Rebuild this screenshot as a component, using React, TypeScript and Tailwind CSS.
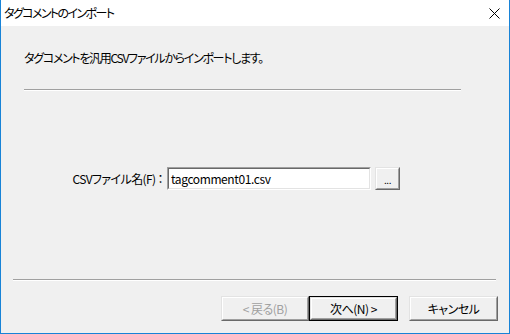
function RaisedButton({
  children,
  width,
  isDefault,
  disabled,
}: {
  children: React.ReactNode;
  width: string;
  isDefault?: boolean;
  disabled?: boolean;
}) {
  return (
    <div className={"h-[25px] flex " + width + (isDefault ? " border border-black" : "")}>
      <div className="flex-1 flex border border-t-[#e3e3e3] border-l-[#e3e3e3] border-r-[#696969] border-b-[#696969]">
        <div
          className={
            "flex-1 flex items-center justify-center tracking-[-0.5px] border border-t-white border-l-white border-r-[#a0a0a0] border-b-[#a0a0a0] " +
            (disabled ? "text-[#a0a0a0]" : "text-black")
          }
        >
          {children}
        </div>
      </div>
    </div>
  );
}

export default function App() {
  return (
    <div className="w-[510px] h-[334px] flex flex-col border-x border-b border-[#1883d7] bg-[#f0f0f0] text-[12px] leading-4 text-black font-['Noto_Sans_CJK_JP',sans-serif] [font-feature-settings:'palt']">
      {/* title bar */}
      <div className="h-[26px] bg-white flex items-center justify-between pl-[3px] pr-[9px]">
        <span className="tracking-[-1.6px]">タグコメントのインポート</span>
        <svg width="11" height="11" viewBox="0 0 11 11" className="mt-[1px]">
          <path d="M0.5 0.5 L10.5 10.5 M10.5 0.5 L0.5 10.5" stroke="#000" strokeWidth="1" />
        </svg>
      </div>

      <div className="flex-1 flex flex-col">
        <p className="mt-[24px] ml-[23px] tracking-[-1.3px]">タグコメントを汎用CSVファイルからインポートします。</p>

        <div className="mt-[23px] ml-[23px] w-[437px] border-t border-b border-t-[#a0a0a0] border-b-white" />

        <div className="mt-[76px] ml-[23px] flex items-center h-[23px]">
          <label className="w-[143px] pr-[4px] text-right tracking-[-0.6px]">CSVファイル名(F) ：</label>
          <div className="w-[204px] h-[23px] flex border border-t-[#a0a0a0] border-l-[#a0a0a0] border-r-white border-b-white">
            <div className="flex-1 flex items-center bg-white pl-[2px] tracking-[-0.4px] border border-t-[#696969] border-l-[#696969] border-r-[#e3e3e3] border-b-[#e3e3e3]">
              tagcomment01.csv
            </div>
          </div>
          <div className="ml-[4px] w-[25px] h-[23px] flex border border-t-[#e3e3e3] border-l-[#e3e3e3] border-r-[#696969] border-b-[#696969]">
            <div className="flex-1 flex items-center justify-center border border-t-white border-l-white border-r-[#a0a0a0] border-b-[#a0a0a0] text-[10px] tracking-[-0.5px] pt-[3px]">
              ...
            </div>
          </div>
        </div>

        <div className="mt-[89px] ml-[12px] w-[483px] border-t border-b border-t-[#a0a0a0] border-b-white" />

        <div className="mt-[15px] ml-[220px] flex">
          <RaisedButton width="w-[88px]" disabled>
            &lt; 戻る(B)
          </RaisedButton>
          <RaisedButton width="w-[89px]" isDefault>
            次へ(N) &gt;
          </RaisedButton>
          <div className="w-[11px]" />
          <RaisedButton width="w-[89px]">キャンセル</RaisedButton>
        </div>
      </div>
    </div>
  );
}
